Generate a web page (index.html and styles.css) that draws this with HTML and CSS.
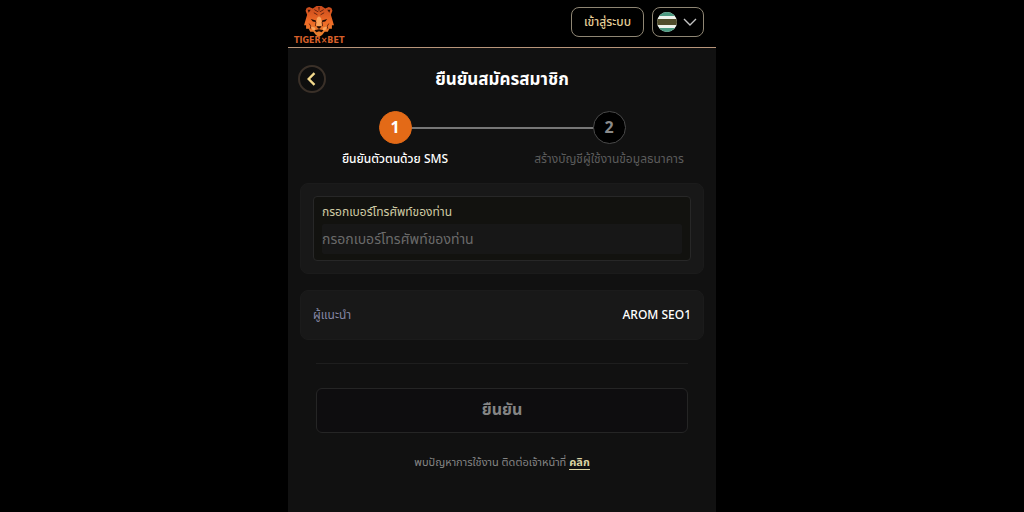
FILE: index.html
```html
<!DOCTYPE html>
<html lang="th">
<head>
  <meta charset="UTF-8" />
  <meta name="viewport" content="width=device-width, initial-scale=1.0"/>
  <title>ยืนยันสมัครสมาชิก</title>

  <link rel="stylesheet" href="styles.css">
</head>

<body>
  <div class="app">
    <header class="topbar">
      <a class="logo" href="#">
        <svg class="logo-tiger" viewBox="0 0 62 62" aria-hidden="true">
          <defs>
            <linearGradient id="fur" x1="0" y1="0" x2="0" y2="1">
              <stop offset="0" stop-color="#c84a1c"/>
              <stop offset="0.5" stop-color="#ee6a26"/>
              <stop offset="1" stop-color="#e8822e"/>
            </linearGradient>
          </defs>
          <path fill="url(#fur)" d="M5 11 L7 6 L12 4 L19 7 L26 2 L36 2 L43 7 L50 4 L55 6 L57 11 L54 19 L57 29 L60 39 L56 39 L56 46 L51 46 L48 52 L42 52 L37 58 L31 62 L25 58 L20 52 L14 52 L11 46 L6 46 L6 39 L2 39 L5 29 L8 19 Z"/>
          <path fill="#f9a45c" d="M27 25 L31 22 L35 25 L37 39 L31 42 L25 39 Z M15 41 L24 44 L23 50 L18 48 Z M47 41 L38 44 L39 50 L44 48 Z"/>
          <path fill="#3a1408" d="M9 9 L15 9 L11 15 Z M53 9 L47 9 L51 15 Z"/>
          <path fill="#1c0a04" d="M30 4 L32 4 L31 15 Z M15 27 L25 30 L25 33 L19 32 Z M47 27 L37 30 L37 33 L43 32 Z M26 41 L36 41 L33 45 L31 46 L29 45 Z M22 49 L31 47 L40 49 L36 53 L31 51 L26 53 Z"/>
          <g fill="none" stroke="#50190a" stroke-width="1.6">
            <path d="M22 9 L29 13 M40 9 L33 13 M21 15 L28 19 M41 15 L34 19"/>
            <path d="M12 36 L15 41 L14 46 M50 36 L47 41 L48 46"/>
            <path d="M25 33 L24 41 M37 33 L38 41"/>
          </g>
        </svg>
        <span class="logo-text">TIGER×BET</span>
      </a>

      <div class="topbar-actions">
        <button type="button" class="btn-login">เข้าสู่ระบบ</button>
        <button type="button" class="btn-lang" aria-label="เปลี่ยนภาษา" aria-haspopup="true">
          <svg class="flag" viewBox="0 0 20 20" aria-hidden="true">
            <clipPath id="round"><circle cx="10" cy="10" r="10"/></clipPath>
            <g clip-path="url(#round)">
              <rect width="20" height="20" fill="#f0f4ee"/>
              <rect width="20" height="4" fill="#4d9a82"/>
              <rect y="7" width="20" height="6" fill="#504d2c"/>
              <rect y="16" width="20" height="4" fill="#4d9a82"/>
            </g>
          </svg>
          <svg class="chevron" viewBox="0 0 14 8" aria-hidden="true">
            <path d="M1 1 L7 7 L13 1"/>
          </svg>
        </button>
      </div>
    </header>

    <main class="content">
      <div class="title-row">
        <button type="button" class="btn-back" aria-label="ย้อนกลับ">
          <svg viewBox="0 0 8 12" aria-hidden="true"><path d="M7 1 L2 6 L7 11"/></svg>
        </button>
        <h1>ยืนยันสมัครสมาชิก</h1>
      </div>

      <ol class="steps">
        <li class="step active">
          <span class="step-number">1</span>
          <span class="step-label">ยืนยันตัวตนด้วย SMS</span>
        </li>
        <li class="step">
          <span class="step-number">2</span>
          <span class="step-label">สร้างบัญชีผู้ใช้งานข้อมูลธนาคาร</span>
        </li>
      </ol>

      <form class="register-form">
        <div class="card">
          <div class="field">
            <label for="phoneInput">กรอกเบอร์โทรศัพท์ของท่าน</label>
            <input type="tel" id="phoneInput" placeholder="กรอกเบอร์โทรศัพท์ของท่าน" />
          </div>
        </div>

        <div class="card referrer">
          <span class="referrer-label">ผู้แนะนำ</span>
          <span class="referrer-name">AROM SEO1</span>
        </div>

        <div class="submit-area">
          <button type="submit" class="btn-submit" disabled>ยืนยัน</button>
        </div>
      </form>

      <p class="help">พบปัญหาการใช้งาน ติดต่อเจ้าหน้าที่ <a href="#">คลิก</a></p>
    </main>
  </div>
</body>
</html>
```

FILE: styles.css
```css
* {
  box-sizing: border-box;
}

body {
  margin: 0;
  padding-right: 20px;
  background: #000;
  color: #fff;
  font-family: "Noto Sans", "Noto Sans Thai", sans-serif;
  font-size: 12px;
  line-height: 18px;
}

button,
input {
  font-family: inherit;
}

.app {
  max-width: 428px;
  min-height: 100vh;
  margin: 0 auto;
  background: #111;
}

.topbar {
  display: flex;
  justify-content: space-between;
  align-items: center;
  height: 48px;
  padding: 0 12px 3px 6px;
  background: #000;
  border-bottom: 1px solid #b8957a;
}

.logo {
  display: flex;
  flex-direction: column;
  align-items: center;
  padding-top: 6px;
  text-decoration: none;
}

.logo-tiger {
  width: 32px;
  height: 32px;
}

.logo-text {
  font-family: "DejaVu Sans", sans-serif;
  font-size: 8px;
  font-weight: bold;
  line-height: 8px;
  color: #d8602a;
}

.topbar-actions {
  display: flex;
  gap: 8px;
}

.btn-login,
.btn-lang {
  height: 30px;
  border: 1px solid #8f8674;
  border-radius: 8px;
  background: #000;
  cursor: pointer;
}

.btn-login {
  padding: 0 12px;
  color: #e6cf98;
  font-size: 12px;
  font-weight: 500;
}

.btn-lang {
  display: flex;
  align-items: center;
  gap: 6px;
  padding: 0 6px 0 4px;
}

.flag {
  width: 20px;
  height: 20px;
}

.chevron {
  width: 14px;
  height: 8px;
}

.chevron path {
  fill: none;
  stroke: #c4c4c4;
  stroke-width: 1.4;
}

.content {
  padding: 17px 12px;
}

.title-row {
  display: grid;
  grid-template-columns: 28px 1fr 28px;
  align-items: center;
}

.title-row h1 {
  margin: 0;
  font-size: 17px;
  font-weight: 700;
  line-height: 24px;
  text-align: center;
}

.btn-back {
  display: flex;
  align-items: center;
  justify-content: center;
  width: 28px;
  height: 28px;
  margin-left: -2px;
  padding: 0;
  border: 2px solid #3a3028;
  border-radius: 50%;
  background: #0e0e0e;
  cursor: pointer;
}

.btn-back svg {
  width: 10px;
  height: 14px;
  margin-right: 2px;
}

.btn-back path {
  fill: none;
  stroke: #f3d98c;
  stroke-width: 2;
}

.steps {
  display: flex;
  margin: 18px -12px 15px;
  padding: 0;
  list-style: none;
}

.step {
  flex: 1;
  position: relative;
  display: flex;
  flex-direction: column;
  align-items: center;
  gap: 6px;
  color: #5c5c5c;
}

/* line between the two circles */
.step + .step::before {
  content: "";
  position: absolute;
  top: 16px;
  right: 50%;
  width: 100%;
  height: 2px;
  background: #777;
}

.step-number {
  position: relative;
  z-index: 1;
  display: flex;
  align-items: center;
  justify-content: center;
  width: 33px;
  height: 33px;
  padding-bottom: 2px;
  border: 1px solid #4a4a4a;
  border-radius: 50%;
  background: #000;
  color: #8a8a8a;
  font-size: 16px;
  font-weight: 700;
}

.step.active {
  z-index: 1;
  color: #fff;
}

.step.active .step-number {
  border-color: #e36a17;
  background: #e36a17;
  color: #fff;
}

.step.active .step-label {
  font-weight: 500;
}

.card {
  margin-bottom: 16px;
  padding: 12px;
  border: 1px solid #1b1b1b;
  border-radius: 8px;
  background: #181818;
}

.field {
  padding: 6px 8px;
  border: 1px solid #272727;
  border-radius: 4px;
  background: #12120f;
}

.field label {
  display: block;
  margin-bottom: 3px;
  color: #cfcaa4;
}

.field input {
  display: block;
  width: 100%;
  height: 30px;
  padding: 0 0 2px;
  border: none;
  border-radius: 2px;
  outline: none;
  background: #171717;
  color: #fff;
  font-size: 14px;
}

.field input::placeholder {
  color: #6a6a6a;
}

.referrer {
  display: flex;
  justify-content: space-between;
  align-items: center;
  min-height: 50px;
  margin-bottom: 23px;
}

.referrer-label {
  color: #8486a4;
}

.referrer-name {
  font-weight: 500;
}

.submit-area {
  margin: 0 16px;
  padding-top: 24px;
  border-top: 1px solid #1e1e1e;
}

.btn-submit {
  width: 100%;
  height: 45px;
  padding-bottom: 3px;
  border: 1px solid #252525;
  border-radius: 6px;
  background: #0e0d0f;
  color: #858585;
  font-size: 16px;
  font-weight: 700;
}

.help {
  margin: 20px 0 0;
  color: #858585;
  font-size: 11px;
  text-align: center;
}

.help a {
  border-bottom: 1px solid #dcd5a4;
  color: #dcd5a4;
  font-weight: 700;
  text-decoration: none;
}
```
